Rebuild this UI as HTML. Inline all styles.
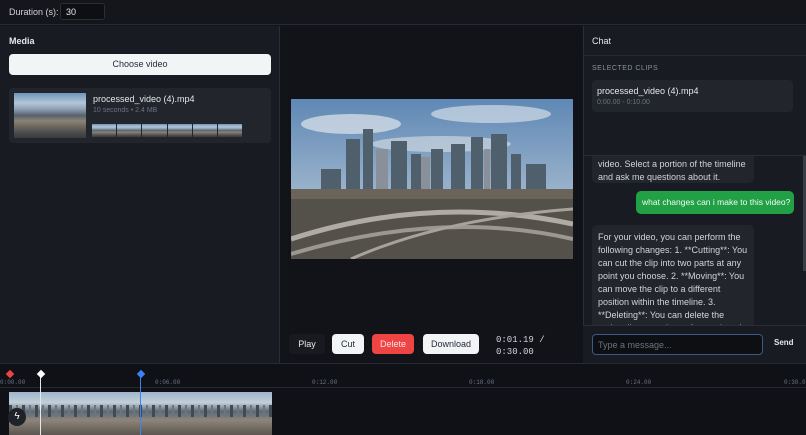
<!DOCTYPE html>
<html><head><style>
*{box-sizing:border-box;margin:0;padding:0}
body{width:806px;height:435px;overflow:hidden;background:#12141a;font-family:"Liberation Sans",sans-serif;color:#e5e7eb;position:relative;font-size:10px}
.abs{position:absolute}
.city{background:linear-gradient(180deg,#6f95bd 0%,#b3c6d6 22%,#8fa0b2 36%,#56616d 50%,#8a8478 62%,#6d665c 75%,#4b4c4e 88%,#3a3a3c 100%)}
.btn{position:absolute;border-radius:4px;font-size:9px;text-align:center;line-height:20px}
.mono{font-family:"Liberation Mono",monospace}
</style></head><body>
<div class="abs" style="left:0;top:0;width:806px;height:25px;background:#14161c;border-bottom:1px solid #262a33"></div>
<div class="abs" style="left:9px;top:7px;font-size:9px;color:#d1d5db">Duration (s):</div>
<div class="abs" style="left:60px;top:3px;width:45px;height:17px;background:#0d0f13;border:1px solid #2a2e36;border-radius:3px;font-size:9px;padding:3px 5px">30</div>

<div class="abs" style="left:0;top:26px;width:280px;height:337px;background:#181b21;border-right:1px solid #2a2e36"></div>
<div class="abs" style="left:9px;top:36px;font-size:9px;font-weight:bold">Media</div>
<div class="btn" style="left:9px;top:54px;width:262px;height:21px;background:#f3f4f6;color:#1f2937;border-radius:4px">Choose video</div>
<div class="abs" style="left:9px;top:88px;width:262px;height:55px;background:#22252c;border-radius:4px"></div>
<div class="abs city" style="left:14px;top:93px;width:72px;height:45px"></div>
<div class="abs" style="left:93px;top:94px;font-size:9px">processed_video (4).mp4</div>
<div class="abs" style="left:93px;top:107px;font-size:7px;color:#6b7280">10 seconds • 2.4 MB</div>
<div class="abs" style="left:92px;top:124px;width:150px;height:13px;display:flex;gap:1px">
<div class="city" style="flex:1"></div><div class="city" style="flex:1"></div><div class="city" style="flex:1"></div><div class="city" style="flex:1"></div><div class="city" style="flex:1"></div><div class="city" style="flex:1"></div></div>

<div class="abs" style="left:281px;top:26px;width:302px;height:337px;background:#111318"></div>
<svg class="abs" style="left:291px;top:99px" width="282" height="160" viewBox="0 0 282 160">
<defs><linearGradient id="s" x1="0" y1="0" x2="0" y2="1"><stop offset="0" stop-color="#5f88b5"/><stop offset="1" stop-color="#c5d2dc"/></linearGradient></defs>
<rect width="282" height="160" fill="url(#s)"/>
<ellipse cx="60" cy="25" rx="50" ry="10" fill="#dfe6ec" opacity=".7"/><ellipse cx="200" cy="15" rx="60" ry="9" fill="#e5eaef" opacity=".6"/><ellipse cx="150" cy="45" rx="70" ry="8" fill="#d8dfe5" opacity=".6"/>
<g fill="#4f5f6c"><rect x="55" y="40" width="14" height="55"/><rect x="72" y="30" width="10" height="65"/><rect x="100" y="42" width="16" height="50"/><rect x="120" y="55" width="10" height="40"/><rect x="140" y="50" width="12" height="45"/><rect x="160" y="45" width="14" height="50"/><rect x="180" y="38" width="12" height="57"/><rect x="200" y="35" width="16" height="60"/><rect x="220" y="55" width="10" height="40"/><rect x="30" y="70" width="20" height="25"/><rect x="235" y="65" width="20" height="30"/></g>
<g fill="#8a9099"><rect x="85" y="50" width="12" height="45"/><rect x="130" y="58" width="9" height="37"/><rect x="193" y="50" width="6" height="45"/></g>
<rect y="90" width="282" height="70" fill="#6b645a"/>
<rect y="100" width="282" height="60" fill="#4a4844" opacity=".7"/>
<path d="M0 140 Q140 95 282 125" stroke="#b0aca4" stroke-width="5" fill="none"/>
<path d="M0 155 Q150 110 282 140" stroke="#9d988f" stroke-width="4" fill="none"/>
<path d="M60 160 Q150 120 282 110" stroke="#a8a39a" stroke-width="3" fill="none"/>
</svg>
<div class="btn" style="left:289px;top:334px;width:36px;height:20px;background:#181a1f;color:#e5e7eb">Play</div>
<div class="btn" style="left:332px;top:334px;width:32px;height:20px;background:#f3f4f6;color:#1f2937">Cut</div>
<div class="btn" style="left:372px;top:334px;width:42px;height:20px;background:#ef4444;color:#fde2e2">Delete</div>
<div class="btn" style="left:423px;top:334px;width:56px;height:20px;background:#f3f4f6;color:#1f2937">Download</div>
<div class="abs mono" style="left:496px;top:334px;font-size:9px;line-height:12px;color:#d1d5db">0:01.19 /<br>0:30.00</div>

<div class="abs" style="left:583px;top:26px;width:223px;height:337px;background:#181b21;border-left:1px solid #2a2e36"></div>
<div class="abs" style="left:583px;top:55px;width:223px;height:1px;background:#262a33"></div>
<div class="abs" style="left:592px;top:36px;font-size:9px">Chat</div>
<div class="abs" style="left:592px;top:65px;font-size:7px;color:#8b919c;letter-spacing:.5px">SELECTED CLIPS</div>
<div class="abs" style="left:592px;top:80px;width:201px;height:32px;background:#22252c;border-radius:4px"></div>
<div class="abs" style="left:597px;top:86px;font-size:9px">processed_video (4).mp4</div>
<div class="abs" style="left:597px;top:99px;font-size:7px;color:#6b7280">0:00.00 - 0:10.00</div>
<div class="abs" style="left:584px;top:155px;width:222px;height:170px;background:#181b21;border-top:1px solid #2a2e36;overflow:hidden">
 <div class="abs" style="left:8px;top:-17px;width:162px;height:44px;background:#22252c;border-radius:5px;font-size:9px;line-height:13px;padding:6px 6px;color:#d1d5db">Hi! I can help you edit your<br>video. Select a portion of the timeline and ask me questions about it.</div>
 <div class="abs" style="left:52px;top:35px;width:158px;height:23px;background:#22a046;border-radius:5px;font-size:8.5px;line-height:23px;padding-left:6px;color:#f0fdf4">what changes can i make to this video?</div>
 <div class="abs" style="left:8px;top:69px;width:162px;height:120px;background:#22252c;border-radius:5px;font-size:9px;line-height:13px;padding:6px 6px;color:#d1d5db">For your video, you can perform the following changes: 1. **Cutting**: You can cut the clip into two parts at any point you choose. 2. **Moving**: You can move the clip to a different position within the timeline. 3. **Deleting**: You can delete the entire clip or sections after cutting. 4. **Altering Colors/Brightness**: You can change</div>
 <div class="abs" style="left:219px;top:0;width:3px;height:115px;background:#3a3e46"></div>
</div>
<div class="abs" style="left:583px;top:325px;width:223px;height:38px;background:#181b21;border-top:1px solid #2a2e36"></div>
<div class="abs" style="left:592px;top:334px;width:171px;height:21px;background:#0d0f13;border:1px solid #3b5a85;border-radius:4px;font-size:9px;color:#6b7280;padding:5px 5px">Type a message...</div>
<div class="abs" style="left:774px;top:338px;font-size:8px;font-weight:bold">Send</div>

<div class="abs" style="left:0;top:363px;width:806px;height:72px;background:#0f1116;border-top:1px solid #262a33"></div>
<div class="abs" style="left:0;top:387px;width:806px;height:1px;background:#262a33"></div>
<div class="abs mono" style="left:0;top:379px;font-size:6px;color:#6b7280;width:806px">
<span class="abs" style="left:0">0:00.00</span><span class="abs" style="left:155px">0:06.00</span><span class="abs" style="left:312px">0:12.00</span><span class="abs" style="left:469px">0:18.00</span><span class="abs" style="left:626px">0:24.00</span><span class="abs" style="left:784px">0:30.00</span></div>
<div class="abs" style="left:9px;top:392px;width:263px;height:43px;background:linear-gradient(180deg,#9fb6cc 0,#c3d0da 25%,#5c6873 45%,#8e857a 65%,#5a554f 100%)"></div>
<div class="abs" style="left:9px;top:405px;width:263px;height:12px;background:repeating-linear-gradient(90deg,#3f4a55 0 3px,transparent 3px 7px,#6a7580 7px 9px,transparent 9px 13px)"></div>
<div class="abs" style="left:8px;top:408px;width:18px;height:18px;border-radius:9px;background:#1f2228;color:#fff;font-size:10px;text-align:center;line-height:18px">ϟ</div>
<div class="abs" style="left:40px;top:374px;width:1px;height:61px;background:#e5e7eb"></div>
<div class="abs" style="left:140px;top:374px;width:1px;height:61px;background:#3b82f6"></div>
<div class="abs" style="left:7px;top:371px;width:6px;height:6px;background:#ef4444;transform:rotate(45deg)"></div>
<div class="abs" style="left:38px;top:371px;width:6px;height:6px;background:#fff;transform:rotate(45deg)"></div>
<div class="abs" style="left:138px;top:371px;width:6px;height:6px;background:#3b82f6;transform:rotate(45deg)"></div>
</body></html>
